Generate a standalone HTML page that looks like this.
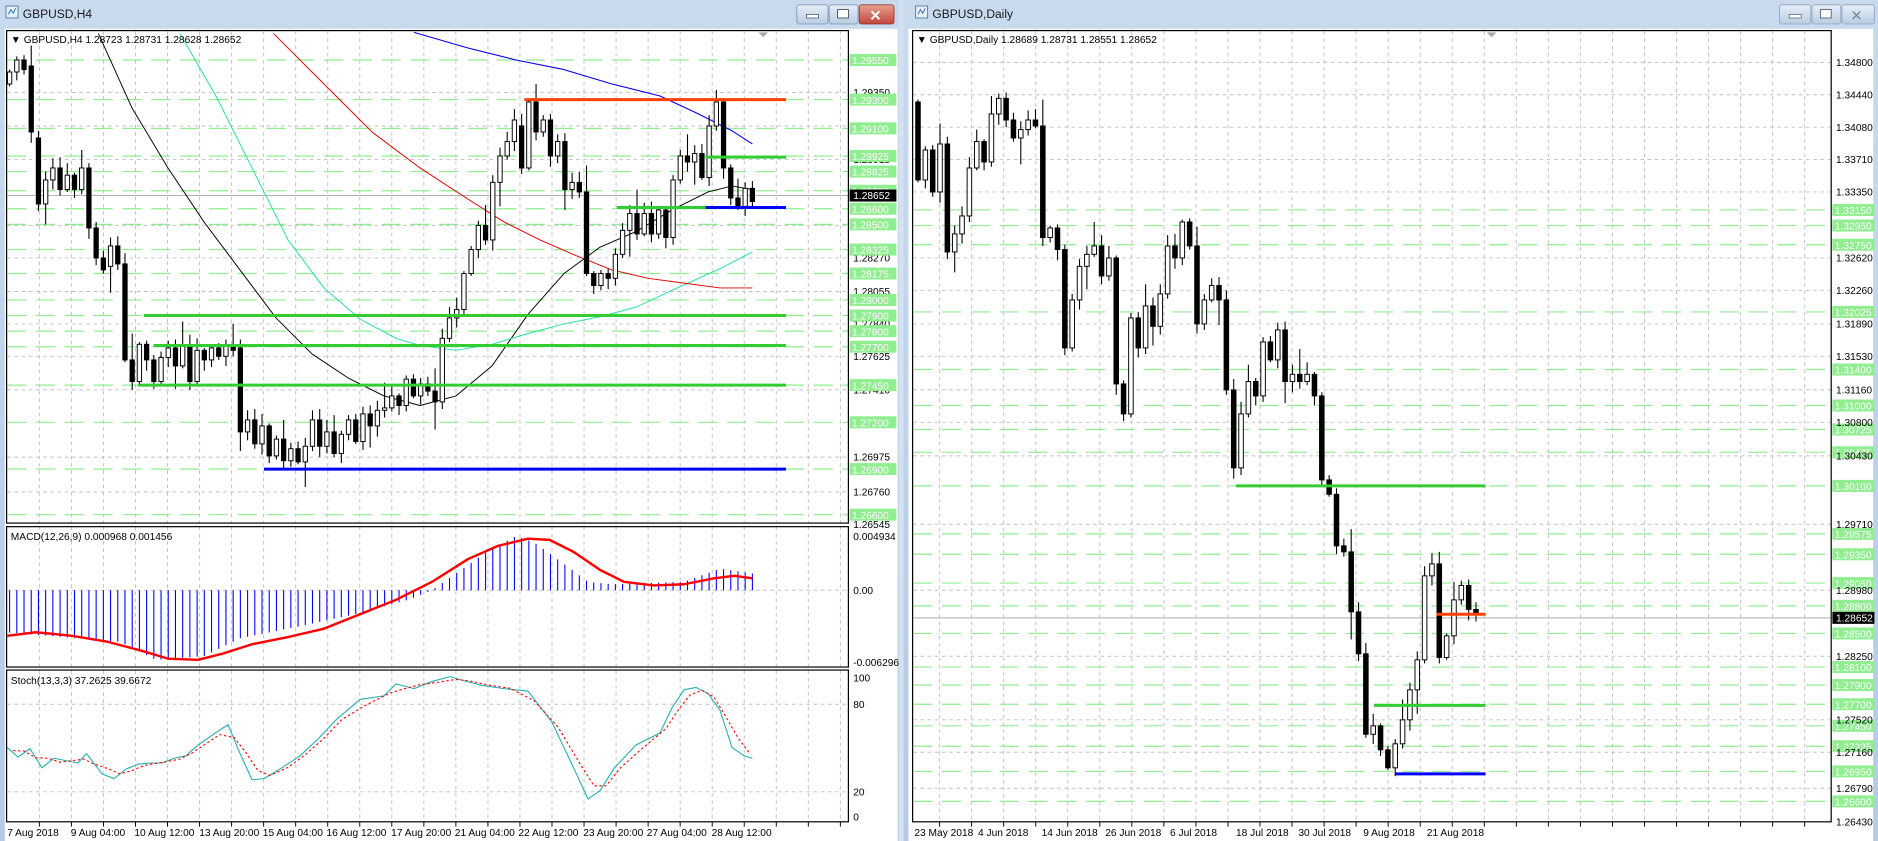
<!DOCTYPE html>
<html><head><meta charset="utf-8">
<style>
html,body{margin:0;padding:0;background:#fff;overflow:hidden}
svg{display:block}
text{font-family:"Liberation Sans",sans-serif}
</style></head>
<body>
<svg id="s" xmlns="http://www.w3.org/2000/svg" width="1878" height="841" viewBox="0 0 1565 701" preserveAspectRatio="none">
<defs>
<linearGradient id="tb" x1="0" y1="0" x2="0" y2="1"><stop offset="0" stop-color="#c9daee"/><stop offset="1" stop-color="#b3cbe6"/></linearGradient>
<linearGradient id="bt" x1="0" y1="0" x2="0" y2="1"><stop offset="0" stop-color="#e6eef8"/><stop offset="1" stop-color="#b9cde5"/></linearGradient>
<linearGradient id="cl" x1="0" y1="0" x2="0" y2="1"><stop offset="0" stop-color="#e8a090"/><stop offset="1" stop-color="#c2453a"/></linearGradient>
</defs>
<!-- window chrome -->
<rect x="0" y="0" width="1565" height="701" fill="#bfd3ea"/>
<rect x="0" y="0" width="749" height="701" fill="url(#tb)"/>
<rect x="753" y="0" width="812" height="701" fill="url(#tb)"/>
<rect x="749" y="0" width="4" height="701" fill="#d4e1f0"/>
<rect x="4" y="24" width="744" height="677" fill="#fff"/>
<rect x="757" y="24" width="804" height="677" fill="#fff"/>
<!-- title icons -->
<rect x="5" y="5" width="10" height="10" fill="#e8f0f8" stroke="#5080b0" stroke-width="0.8"/>
<path d="M7 12 L9 8 L11 11 L13 7" stroke="#3070b0" fill="none" stroke-width="0.8"/>
<text x="19" y="15" font-size="10" fill="#1a1a1a">GBPUSD,H4</text>
<rect x="763" y="5" width="10" height="10" fill="#e8f0f8" stroke="#5080b0" stroke-width="0.8"/>
<path d="M765 12 L767 8 L769 11 L771 7" stroke="#3070b0" fill="none" stroke-width="0.8"/>
<text x="777" y="15" font-size="10" fill="#1a1a1a">GBPUSD,Daily</text>
<!-- buttons left -->
<rect x="664" y="4" width="26" height="16" rx="2" fill="url(#bt)" stroke="#7f95b3" stroke-width="0.7"/>
<rect x="672" y="12" width="10" height="3" fill="#fff" stroke="#445" stroke-width="0.6"/>
<rect x="691" y="4" width="24" height="16" rx="2" fill="url(#bt)" stroke="#7f95b3" stroke-width="0.7"/>
<rect x="698" y="8" width="9" height="7" fill="#fff" stroke="#445" stroke-width="0.7"/>
<rect x="716" y="4" width="29" height="16" rx="2" fill="url(#cl)" stroke="#8a3a30" stroke-width="0.7"/>
<text x="724.5" y="17" font-size="12" fill="#fff" font-weight="bold">✕</text>
<!-- buttons right -->
<rect x="1483" y="4" width="26" height="16" rx="2" fill="url(#bt)" stroke="#8fa3bd" stroke-width="0.7"/>
<rect x="1491" y="12" width="10" height="3" fill="#fff" stroke="#556" stroke-width="0.6"/>
<rect x="1510" y="4" width="24" height="16" rx="2" fill="url(#bt)" stroke="#8fa3bd" stroke-width="0.7"/>
<rect x="1517" y="8" width="9" height="7" fill="#fff" stroke="#556" stroke-width="0.7"/>
<rect x="1535" y="4" width="27" height="16" rx="2" fill="url(#bt)" stroke="#8fa3bd" stroke-width="0.7"/>
<text x="1542" y="17" font-size="12" fill="#7a8696">✕</text>

<g id="g"></g>

<!-- panel borders -->
<g fill="none" stroke="#000" stroke-width="1">
<rect x="5.5" y="25.5" width="701.5" height="410.5"/>
<rect x="5.5" y="439" width="701.5" height="117"/>
<rect x="5.5" y="558.5" width="701.5" height="126.5"/>
<rect x="760.5" y="25.5" width="765.5" height="659.5"/>
</g>
<path d="M632 27 L640 27 L636 31 Z" fill="#aaa"/>
<path d="M1239 27 L1247 27 L1243 31 Z" fill="#aaa"/>

<!-- panel titles -->
<text x="9" y="36" font-size="8.5" fill="#000">▼ GBPUSD,H4  1.28723 1.28731 1.28628 1.28652</text>
<text x="9" y="450" font-size="8.5" fill="#000">MACD(12,26,9) 0.000968 0.001456</text>
<text x="9" y="570" font-size="8.5" fill="#000">Stoch(13,3,3) 37.2625 39.6672</text>
<text x="764" y="36" font-size="8.5" fill="#000">▼ GBPUSD,Daily  1.28689 1.28731 1.28551 1.28652</text>

<!-- left axis black labels -->
<g font-size="8.5" fill="#000">
<text x="711" y="80">1.29350</text>
<text x="711" y="108">1.29130</text>
<text x="711" y="136">1.28915</text>
<text x="711" y="191">1.28485</text>
<text x="711" y="218">1.28270</text>
<text x="711" y="246">1.28055</text>
<text x="711" y="273">1.27840</text>
<text x="711" y="300">1.27625</text>
<text x="711" y="328">1.27410</text>
<text x="711" y="384">1.26975</text>
<text x="711" y="413">1.26760</text>
<text x="711" y="440">1.26545</text>
<text x="711" y="450">0.004934</text>
<text x="711" y="495">0.00</text>
<text x="711" y="555">-0.006296</text>
<text x="711" y="568">100</text>
<text x="711" y="590">80</text>
<text x="711" y="663">20</text>
<text x="711" y="684">0</text>
</g>
<g id="gl"></g>
<rect x="708" y="158" width="39" height="10" fill="#000"/>
<text x="711" y="166" font-size="8.5" fill="#fff">1.28652</text>

<!-- right axis black labels -->
<g font-size="8.5" fill="#000">
<text x="1530" y="55">1.34800</text>
<text x="1530" y="82">1.34440</text>
<text x="1530" y="109">1.34080</text>
<text x="1530" y="136">1.33710</text>
<text x="1530" y="163">1.33350</text>
<text x="1530" y="218">1.32620</text>
<text x="1530" y="245">1.32260</text>
<text x="1530" y="273">1.31890</text>
<text x="1530" y="300">1.31530</text>
<text x="1530" y="328">1.31160</text>
<text x="1530" y="355">1.30800</text>
<text x="1530" y="383">1.30430</text>
<text x="1530" y="440">1.29710</text>
<text x="1530" y="495">1.28980</text>
<text x="1530" y="550">1.28250</text>
<text x="1530" y="603">1.27520</text>
<text x="1530" y="630">1.27160</text>
<text x="1530" y="660">1.26790</text>
<text x="1530" y="688">1.26430</text>
</g>
<rect x="1527" y="510" width="35" height="10" fill="#000"/>
<text x="1530" y="518" font-size="8.5" fill="#fff">1.28652</text>

<!-- dates -->
<g font-size="8.5" fill="#000">
<text x="6" y="697">7 Aug 2018</text>
<text x="59" y="697">9 Aug 04:00</text>
<text x="112" y="697">10 Aug 12:00</text>
<text x="166" y="697">13 Aug 20:00</text>
<text x="219" y="697">15 Aug 04:00</text>
<text x="272" y="697">16 Aug 12:00</text>
<text x="326" y="697">17 Aug 20:00</text>
<text x="379" y="697">21 Aug 04:00</text>
<text x="432" y="697">22 Aug 12:00</text>
<text x="486" y="697">23 Aug 20:00</text>
<text x="539" y="697">27 Aug 04:00</text>
<text x="593" y="697">28 Aug 12:00</text>
<text x="762" y="697">23 May 2018</text>
<text x="815" y="697">4 Jun 2018</text>
<text x="868" y="697">14 Jun 2018</text>
<text x="921" y="697">26 Jun 2018</text>
<text x="975" y="697">6 Jul 2018</text>
<text x="1030" y="697">18 Jul 2018</text>
<text x="1082" y="697">30 Jul 2018</text>
<text x="1136" y="697">9 Aug 2018</text>
<text x="1189" y="697">21 Aug 2018</text>
</g>
</svg>
<script>
var ns="http://www.w3.org/2000/svg",G=document.getElementById('g'),GL=document.getElementById('gl');
function el(t,a,p){var e=document.createElementNS(ns,t);for(var k in a)e.setAttribute(k,a[k]);(p||G).appendChild(e);return e;}
function ln(x1,y1,x2,y2,c,w,d){var a={x1:x1,y1:y1,x2:x2,y2:y2,stroke:c,'stroke-width':w||1};if(d)a['stroke-dasharray']=d;el('line',a);}
function pl(pts,c,w,d){var a={points:pts.map(function(p){return p.join(',')}).join(' '),fill:'none',stroke:c,'stroke-width':w||1,'stroke-linejoin':'round'};if(d)a['stroke-dasharray']=d;el('polyline',a);}
var GR='#c0c0c0',GN='#90ee90';
// left vertical grid
for(var x=32.8;x<707;x+=26.7){ln(x,26,x,436,GR,0.8,'3,3');ln(x,439,x,556,GR,0.8,'3,3');ln(x,559,x,685,GR,0.8,'3,3');ln(x,685,x,689,'#000',0.8);}
[77,105,133,188,215,243,270,297,325,381,410].forEach(function(y){ln(6,y,707,y,GR,0.8,'3,3');});
ln(6,492,707,492,GR,0.8,'3,3');ln(6,587,707,587,GR,0.8,'3,3');ln(6,660,707,660,GR,0.8,'3,3');
var LG=[[50,'1.29550'],[83,'1.29300'],[107,'1.29100'],[130,'1.28925'],[143,'1.28825'],[159,'1.28700'],[174,'1.28600'],[187,'1.28500'],[208,'1.28325'],[228,'1.28175'],[250,'1.28000'],[263,'1.27900'],[276,'1.27800'],[289,'1.27700'],[321,'1.27450'],[352,'1.27200'],[391,'1.26900'],[429,'1.26600']];
LG.forEach(function(a){ln(6,a[0],707,a[0],GN,1,'16,8');});
// right grid
for(var x=783;x<1526;x+=26.7){ln(x,26,x,685,GR,0.8,'3,3');ln(x,685,x,689,'#000',0.8);}
[52,79,106,133,160,215,242,270,297,325,352,380,437,492,547,600,627,657].forEach(function(y){ln(761,y,1526,y,GR,0.8,'3,3');});
var RG=[[175,'1.33150'],[188,'1.32950'],[204,'1.32750'],[260,'1.32025'],[308,'1.31400'],[338,'1.31000'],[358,'1.30725'],[377,'1.30475'],[405,'1.30100'],[445,'1.29575'],[462,'1.29350'],[486,'1.29050'],[505,'1.28800'],[528,'1.28500'],[556,'1.28100'],[571,'1.27900'],[587,'1.27700'],[605,'1.27450'],[622,'1.27225'],[643,'1.26950'],[668,'1.26600']];
RG.forEach(function(a){ln(761,a[0],1526,a[0],GN,1,'16,8');});
// current price lines
ln(6,163,707,163,'#aaa',0.8);ln(761,515,1526,515,'#aaa',0.8);
// green labels
function glab(x,y,t,w){el('rect',{x:x,y:y-5,width:w,height:10,fill:GN},GL);var e=el('text',{x:x+2,y:y+3.5,'font-size':8.5,fill:'#fff'},GL);e.textContent=t;}
LG.forEach(function(a){glab(708,a[0],a[1],39);});
RG.forEach(function(a){glab(1527,a[0],a[1],35);});
// moving averages left
pl([[82,28],[110,90],[140,140],[170,185],[200,225],[230,265],[260,295],[290,315],[320,330],[350,338],[380,330],[410,305],[440,262],[470,228],[500,206],[530,193],[560,175],[590,160],[610,155],[627,158]],'#000',0.8);
pl([[150,28],[180,80],[210,140],[240,200],[270,240],[300,266],[330,282],[350,288],[380,292],[410,287],[440,278],[470,270],[500,264],[530,256],[560,242],[600,224],[627,210]],'#20e0a0',0.8);
pl([[228,28],[270,70],[310,110],[350,140],[390,166],[420,185],[450,200],[480,213],[510,225],[540,232],[570,236],[600,240],[627,240]],'#e00000',0.8);
pl([[345,27],[390,40],[430,50],[470,58],[510,70],[550,80],[580,94],[610,109],[627,120]],'#0000ee',0.9);
// candles
function candles(arr,x0,x1,w){var n=arr.length,sp=(x1-x0)/(n-1);arr.forEach(function(c,i){var x=x0+i*sp,o=c[0],cl=c[1],t=Math.min(o,cl),b=Math.max(o,cl),r1=2+(i*37)%9,r2=2+(i*53)%8;if(i%7==3)r1+=12;if(i%9==5)r2+=14;ln(x,t-r1,x,b+r2,'#000',0.9);if(b-t<1.2)b=t+1.2;el('rect',{x:x-w/2,y:t,width:w,height:b-t,fill:cl>o?'#000':'#fff',stroke:'#000','stroke-width':0.8});});}
var L=[[70,60],[60,50],[50,58],[55,110],[115,170],[170,150],[150,140],[140,158],[158,146],[146,158],[158,140],[140,190],[190,215],[215,225],[222,205],[205,220],[220,300],[300,318],[318,287],[287,300],[300,318],[318,298],[298,290],[290,305],[305,288],[288,318],[318,292],[292,300],[300,290],[290,297],[297,288],[288,292],[290,360],[360,350],[350,370],[370,355],[355,380],[380,366],[366,384],[384,374],[374,385],[385,372],[372,350],[350,372],[372,360],[360,378],[378,362],[362,350],[350,368],[368,345],[345,355],[355,342],[342,340],[340,330],[330,338],[338,316],[316,330],[330,320],[320,326],[326,335],[335,282],[282,265],[265,258],[258,228],[228,208],[208,188],[188,200],[200,152],[152,130],[130,118],[118,100],[105,140],[140,85],[85,110],[110,100],[100,130],[130,118],[118,158],[158,152],[152,160],[160,228],[228,238],[238,228],[228,232],[232,212],[212,192],[192,178],[178,195],[195,178],[178,195],[195,175],[175,198],[198,150],[150,130],[130,135],[135,128],[128,148],[148,105],[105,85],[85,140],[140,165],[165,172],[172,157],[157,168]];
candles(L,8,627,3.6);
var R=[[85,150],[150,125],[125,160],[160,120],[120,210],[210,195],[195,180],[180,140],[140,118],[118,135],[135,95],[95,82],[82,100],[100,115],[115,108],[108,100],[100,105],[105,198],[198,190],[190,208],[208,290],[290,250],[250,222],[222,212],[212,205],[205,230],[230,215],[215,320],[320,345],[345,265],[265,290],[290,255],[255,272],[272,245],[245,205],[205,215],[215,185],[185,205],[205,270],[270,250],[250,238],[238,250],[250,325],[325,390],[390,345],[345,318],[318,330],[330,285],[285,300],[300,275],[275,318],[318,312],[312,318],[318,312],[312,330],[330,400],[400,412],[412,455],[455,460],[460,510],[510,545],[545,612],[612,605],[605,625],[625,640],[640,620],[620,600],[600,575],[575,550],[550,480],[480,470],[470,548],[548,530],[530,500],[500,488],[488,508],[508,512]];
candles(R,765,1230,3.8);
// level lines left
ln(437,83,655,83,'#ff4000',2.5);ln(588,131,655,131,'#33cc33',2.5);ln(514,173,588,173,'#33cc33',2.5);ln(588,173,655,173,'#0000ff',2.5);
ln(120,263,655,263,'#33cc33',2.5);ln(128,288,655,288,'#33cc33',2.5);ln(115,321,655,321,'#33cc33',2.5);ln(220,391,655,391,'#0000ff',2.5);
// level lines right
ln(1030,405,1238,405,'#33cc33',2.5);ln(1197,512,1238,512,'#ff4000',2.5);ln(1145,588,1238,588,'#33cc33',2.5);ln(1163,645,1238,645,'#0000ff',2.5);
// MACD
function interp(pts,x){for(var i=0;i<pts.length-1;i++){if(x>=pts[i][0]&&x<=pts[i+1][0]){var t=(x-pts[i][0])/(pts[i+1][0]-pts[i][0]);return pts[i][1]+t*(pts[i+1][1]-pts[i][1]);}}return pts[pts.length-1][1];}
var H=[[5,527],[100,535],[130,550],[170,547],[200,532],[250,522],[300,511],[340,500],[360,492],[380,478],[410,457],[430,447],[445,452],[470,470],[490,485],[510,487],[570,485],[600,474],[627,478]];
var sp=(627-8)/(L.length-1);
for(var i=0;i<L.length;i++){var x=8+i*sp;ln(x,492,x,interp(H,x),'#0000ff',0.9);}
pl([[6,530],[30,527],[60,530],[90,535],[120,543],[140,549],[165,550],[185,545],[210,537],[240,531],[270,524],[300,512],[330,500],[360,485],[390,466],[415,455],[440,449],[458,450],[478,460],[500,475],[520,485],[545,488],[570,487],[595,482],[612,480],[627,482]],'#ff0000',2);
// Stoch
var ST=[[6,623],[15,631],[25,624],[35,640],[45,632],[55,634],[65,636],[72,628],[85,645],[95,649],[105,641],[115,637],[125,636],[135,636],[145,632],[155,630],[165,621],[178,612],[190,604],[200,628],[210,650],[220,649],[235,640],[250,630],[265,616],[280,600],[300,583],[320,580],[330,570],[345,574],[360,568],[375,564],[385,567],[400,571],[420,574],[440,576],[460,602],[478,640],[490,666],[500,659],[512,640],[530,621],[550,611],[560,590],[570,575],[580,573],[590,578],[600,592],[610,623],[620,630],[627,632]];
pl(ST,'#20b0b0',0.9);
pl(ST.map(function(p,i){var y=(ST[Math.max(0,i-1)][1]+p[1]+ST[Math.min(ST.length-1,i+1)][1])/3;return [p[0]+5,y];}).filter(function(p){return p[0]<=628}),'#ff0000',0.9,'2,2');
</script>
</body></html>
